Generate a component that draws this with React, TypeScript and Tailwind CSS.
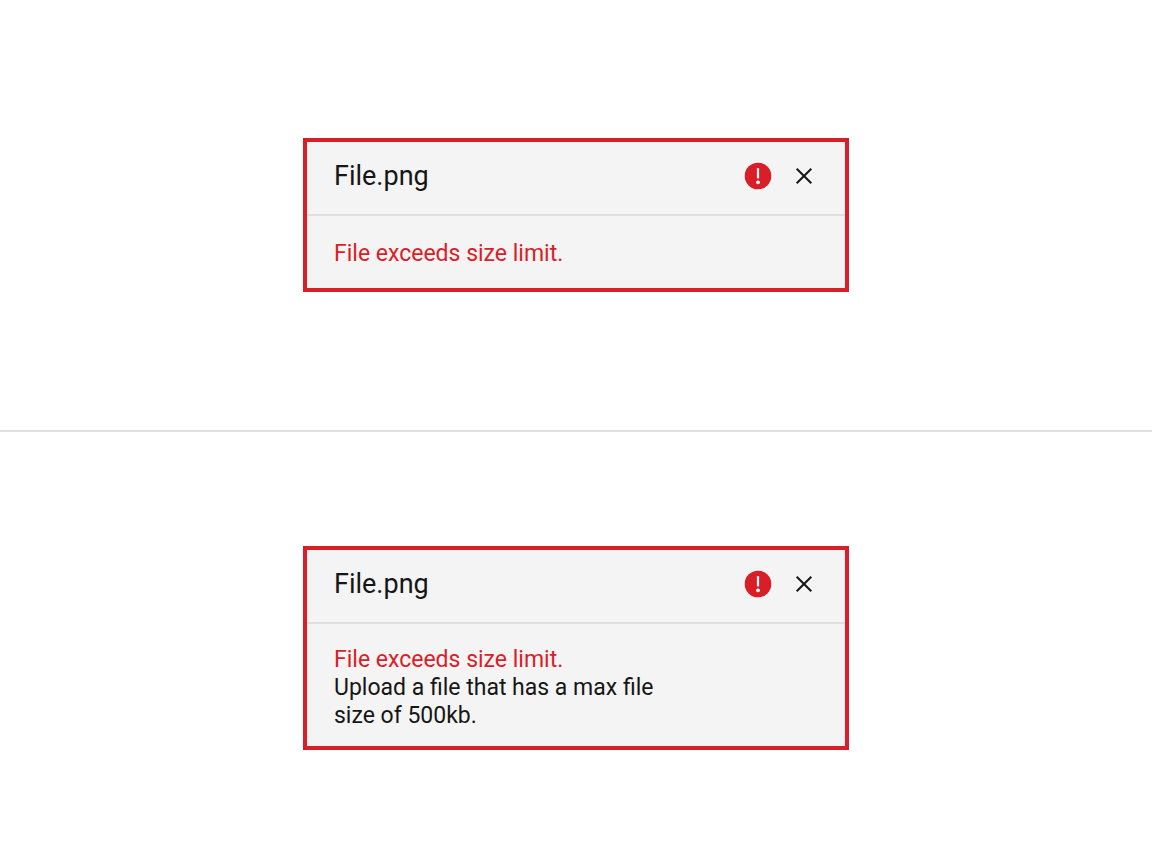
import React from "react";

function ErrorIcon() {
  return (
    <svg viewBox="0 0 28 28" className="size-7 shrink-0" role="img" aria-label="Error">
      <circle cx="14" cy="14" r="13.3" fill="#da1e28" />
      <rect x="12.9" y="6.2" width="2.2" height="10.2" fill="#fff" />
      <circle cx="14" cy="20.3" r="1.9" fill="#fff" />
    </svg>
  );
}

function CloseIcon() {
  return (
    <svg viewBox="0 0 28 28" className="size-7" aria-hidden="true">
      <path d="M6.7 6.7 21.3 21.3M21.3 6.7 6.7 21.3" fill="none" stroke="#161616" strokeWidth="2" />
    </svg>
  );
}

interface FileItemProps {
  name: string;
  error: string;
  detail?: string;
}

function FileItem({ name, error, detail }: FileItemProps) {
  return (
    <article className="w-full max-w-[546px] border-4 border-[#da1e28] bg-[#f4f4f4] text-[#161616]">
      <header className="flex items-center border-b-2 border-[#e0e0e0] px-[27px] pt-4 pb-5">
        <h2 className="flex-1 text-[27px] leading-9">{name}</h2>
        <div className="flex items-center gap-[18px]">
          <ErrorIcon />
          <button type="button" aria-label={`Remove ${name}`} className="cursor-pointer">
            <CloseIcon />
          </button>
        </div>
      </header>
      <div className={`px-[27px] text-[23px] leading-7 ${detail ? "pt-[22px] pb-4" : "pt-6 pb-5"}`}>
        <p className="text-[#da1e28]">{error}</p>
        {detail && <p className="max-w-[350px]">{detail}</p>}
      </div>
    </article>
  );
}

export default function App() {
  return (
    <main className="grid min-h-screen grid-rows-2 bg-white font-['Roboto',sans-serif]">
      <section className="flex items-center justify-center border-b-2 border-[#e0e0e0]">
        <FileItem name="File.png" error="File exceeds size limit." />
      </section>
      <section className="flex items-center justify-center">
        <FileItem
          name="File.png"
          error="File exceeds size limit."
          detail="Upload a file that has a max file size of 500kb."
        />
      </section>
    </main>
  );
}
